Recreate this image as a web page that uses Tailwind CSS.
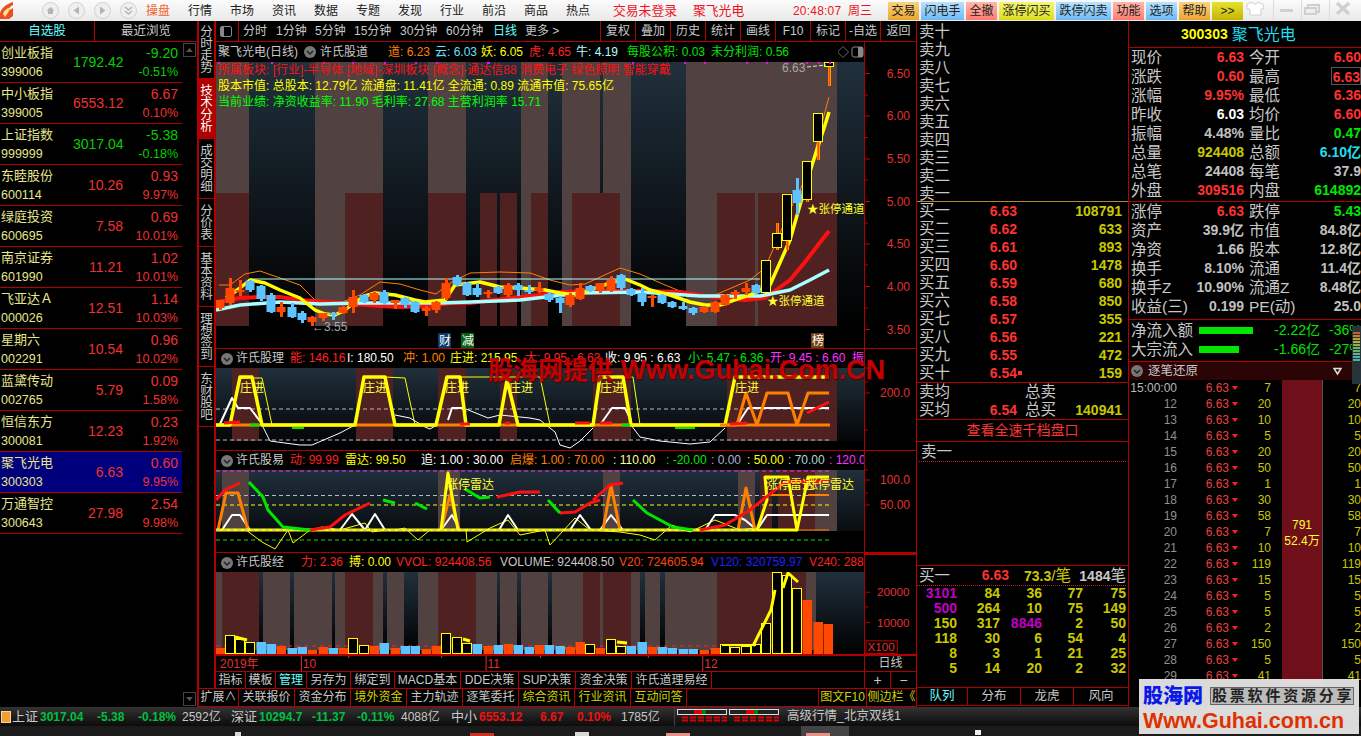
<!DOCTYPE html>
<html lang="zh-CN">
<head>
<meta charset="UTF-8">
<title>聚飞光电 日线</title>
<script src="https://cdn.jsdelivr.net/npm/@tailwindcss/browser@4"></script>
</head>
<body class="bg-black">
<div class="relative w-[1361px] h-[736px] overflow-hidden flex flex-col bg-black text-[#c8c8c8] text-[12px] font-['Liberation_Sans','Noto_Sans_CJK_SC',sans-serif]">

  <!-- top menu -->
  <header class="h-[21px] shrink-0 flex items-center bg-linear-to-b from-[#fbfbfb] to-[#e9e9e9] text-[#222] whitespace-nowrap">
    <svg width="14" height="19" viewBox="0 0 14 19" class="shrink-0"><path d="M0 12 C2 6 7 3 13 1 L13 4 C10 5 9 7 10 9 L13 7 L13 15 L9 18 L0 18 Z" fill="#e8501c"/><path d="M3 13 C4 9 8 7 11 6 C9 9 8 13 5 16 Z" fill="#ffd9a0"/></svg>
    <div class="flex items-center gap-[9px] ml-[28px] w-[96px] shrink-0">
      <svg width="17" height="17" viewBox="0 0 17 17" class="shrink-0"><circle cx="8.5" cy="8.5" r="8" fill="#efefef" stroke="#cfcfcf"/><path d="M4.5 8.5 L8.5 5 L12.5 8.5 L11 8.5 L11 12 L6 12 L6 8.5 Z" fill="#b5b5b5"/></svg>
      <svg width="17" height="17" viewBox="0 0 17 17" class="shrink-0"><circle cx="8.5" cy="8.5" r="8" fill="#efefef" stroke="#cfcfcf"/><path d="M11 4.5 L11 12.5 L5.5 8.5 Z" fill="#b5b5b5"/></svg>
      <svg width="17" height="17" viewBox="0 0 17 17" class="shrink-0"><circle cx="8.5" cy="8.5" r="8" fill="#efefef" stroke="#cfcfcf"/><path d="M6 4.5 L6 12.5 L11.5 8.5 Z" fill="#b5b5b5"/></svg>
      <svg width="17" height="17" viewBox="0 0 17 17" class="shrink-0"><circle cx="8.5" cy="8.5" r="8" fill="#efefef" stroke="#cfcfcf"/><path d="M5 5 L8.5 8 L12 5 M5 9 L8.5 12 L12 9" fill="none" stroke="#b5b5b5" stroke-width="1.6"/></svg>
    </div>
    <nav class="flex ml-[-1px] shrink-0">
      <span class="w-[42px] text-center text-[#f0642c]">操盘</span>
      <span class="w-[42px] text-center">行情</span>
      <span class="w-[42px] text-center">市场</span>
      <span class="w-[42px] text-center">资讯</span>
      <span class="w-[42px] text-center">数据</span>
      <span class="w-[42px] text-center">专题</span>
      <span class="w-[42px] text-center">发现</span>
      <span class="w-[42px] text-center">行业</span>
      <span class="w-[42px] text-center">前沿</span>
      <span class="w-[42px] text-center">商品</span>
      <span class="w-[42px] text-center">热点</span>
    </nav>
    <span class="ml-[14px] w-[80px] shrink-0 text-[#ee1122] text-[12.8px]">交易未登录</span>
    <span class="w-[100px] shrink-0 text-[#ee1122] text-[12.8px]">聚飞光电</span>
    <span class="w-[55px] shrink-0 text-[#ee1122] tracking-[0.2px]">20:48:07</span>
    <span class="w-[40px] shrink-0 text-[#ee1122]">周三</span>
    <div class="flex gap-[2px] shrink-0 text-[#222]">
      <span class="w-[31px] h-[18px] leading-[18px] text-center bg-linear-to-b from-[#fbd27a] to-[#eba52c]">交易</span>
      <span class="w-[43px] h-[18px] leading-[18px] text-center bg-linear-to-b from-[#b9e3ff] to-[#6cb9f4]">闪电手</span>
      <span class="w-[31px] h-[18px] leading-[18px] text-center bg-linear-to-b from-[#ffb8aa] to-[#ff7a72]">全撤</span>
      <span class="w-[55px] h-[18px] leading-[18px] text-center bg-linear-to-b from-[#f6f670] to-[#dcdc10]">涨停闪买</span>
      <span class="w-[55px] h-[18px] leading-[18px] text-center bg-linear-to-b from-[#b9e3ff] to-[#6cb9f4]">跌停闪卖</span>
      <span class="w-[31px] h-[18px] leading-[18px] text-center bg-linear-to-b from-[#ffb8aa] to-[#ff7a72]">功能</span>
      <span class="w-[31px] h-[18px] leading-[18px] text-center bg-linear-to-b from-[#b9e3ff] to-[#6cb9f4]">选项</span>
      <span class="w-[31px] h-[18px] leading-[18px] text-center bg-linear-to-b from-[#fbd27a] to-[#eba52c]">帮助</span>
      <span class="w-[31px] h-[18px] leading-[18px] text-center bg-linear-to-b from-[#e4e42a] to-[#c4b400]">&gt;&gt;</span>
    </div>
    <svg width="118" height="21" viewBox="0 0 118 21" class="shrink-0"><path d="M4 4 L9 2 L11 4 L13 4 L15 2 L20 4 L21 9 L18 9 L18 15 L7 15 L7 9 L4 9 Z" fill="#fff" stroke="#cfcfcf"/><line x1="30.5" y1="0" x2="30.5" y2="20" stroke="#dcdcdc"/><rect x="37" y="9" width="13" height="3" fill="#d0d0d0"/><line x1="58.5" y1="0" x2="58.5" y2="20" stroke="#dcdcdc"/><rect x="65" y="5" width="11" height="7" fill="none" stroke="#cfcfcf" stroke-width="2"/><rect x="62" y="8" width="11" height="6" fill="#eee" stroke="#cfcfcf" stroke-width="2"/><line x1="86.5" y1="0" x2="86.5" y2="20" stroke="#dcdcdc"/><path d="M94 3 L106 14 M106 3 L94 14" stroke="#d0d0d0" stroke-width="3.5"/></svg>
  </header>

  <main class="h-[686px] shrink-0 flex">
    <!-- watch list -->
    <aside class="w-[197px] shrink-0 flex flex-col">
      <div class="h-[21px] shrink-0 flex border-b border-[#b00000] leading-[20px]">
        <span class="w-[95px] text-center text-[#66ffff] border-r border-[#b00000] text-[12.5px]">自选股</span>
        <span class="flex-1 text-center text-[12.5px]">最近浏览</span>
      </div>
      <div class="flex-1 flex">
        <div id="watch" class="w-[182px] shrink-0"></div>
        <div class="flex-1 flex flex-col justify-between pl-[1px] pr-[1px] pt-[1px] pb-[1px]">
          <div class="w-[13px] h-[14px] border border-[#444] flex items-center justify-center"><svg width="7" height="4"><path d="M0 4 L3.5 0 L7 4 Z" fill="#555"/></svg></div>
          <div class="w-[13px] h-[14px] border border-[#444] flex items-center justify-center"><svg width="7" height="4"><path d="M0 0 L3.5 4 L7 0 Z" fill="#555"/></svg></div>
        </div>
      </div>
    </aside>

    <!-- center block -->
    <section class="w-[720px] shrink-0 flex flex-col border-l-2 border-[#b00000]">
      <div class="h-[667px] shrink-0 flex">
        <div class="w-[17px] shrink-0 flex flex-col border-r-2 border-[#b00000] leading-[12px] text-[12.5px]">
          <div class="h-[58px] shrink-0 flex justify-center items-center border-b border-[#b00000]"><span class="block w-[13px] break-all text-center">分时走势</span></div>
          <div class="h-[60px] shrink-0 flex justify-center items-center bg-[#b00000] text-white"><span class="block w-[13px] break-all text-center">技术分析</span></div>
          <div class="h-[60px] shrink-0 flex justify-center items-center border-b border-[#b00000]"><span class="block w-[13px] break-all text-center">成交明细</span></div>
          <div class="h-[48px] shrink-0 flex justify-center items-center border-b border-[#b00000]"><span class="block w-[13px] break-all text-center">分价表</span></div>
          <div class="h-[60px] shrink-0 flex justify-center items-center border-b border-[#b00000]"><span class="block w-[13px] break-all text-center">基本资料</span></div>
          <div class="h-[60px] shrink-0 flex justify-center items-center border-b border-[#b00000]"><span class="block w-[13px] break-all text-center">理想签到</span></div>
          <div class="h-[60px] shrink-0 flex justify-center items-center border-b border-[#b00000]"><span class="block w-[13px] break-all text-center">东财股吧</span></div>
        </div>
        <div class="w-[701px] shrink-0 flex flex-col border-r border-[#b00000]">
          <!-- period toolbar -->
          <div class="h-[21px] shrink-0 flex items-center border-b border-[#b00000] whitespace-nowrap">
            <div class="w-[23px] h-[20px] shrink-0 flex items-center justify-center border-r border-[#b00000] pr-[2px]"><span class="w-[12px] h-[11px] border border-[#888] rounded-[2px] flex"><span class="w-[3px] bg-[#888]"></span></span></div>
            <span class="w-[33px] shrink-0 ml-[4px]">分时</span>
            <span class="w-[39px] shrink-0">1分钟</span>
            <span class="w-[39px] shrink-0">5分钟</span>
            <span class="w-[46px] shrink-0">15分钟</span>
            <span class="w-[46px] shrink-0">30分钟</span>
            <span class="w-[47px] shrink-0">60分钟</span>
            <span class="w-[32px] shrink-0 text-[#66ffff]">日线</span>
            <span class="w-[75px] shrink-0">更多 &gt;</span>
            <span class="w-[35px] shrink-0 h-[20px] leading-[20px] text-center border-l border-[#b00000]">复权</span>
            <span class="w-[35px] shrink-0 h-[20px] leading-[20px] text-center border-l border-[#b00000]">叠加</span>
            <span class="w-[35px] shrink-0 h-[20px] leading-[20px] text-center border-l border-[#b00000]">历史</span>
            <span class="w-[35px] shrink-0 h-[20px] leading-[20px] text-center border-l border-[#b00000]">统计</span>
            <span class="w-[35px] shrink-0 h-[20px] leading-[20px] text-center border-l border-[#b00000]">画线</span>
            <span class="w-[35px] shrink-0 h-[20px] leading-[20px] text-center border-l border-[#b00000]">F10</span>
            <span class="w-[35px] shrink-0 h-[20px] leading-[20px] text-center border-l border-[#b00000]">标记</span>
            <span class="w-[35px] shrink-0 h-[20px] leading-[20px] text-center border-l border-[#b00000]">-自选</span>
            <span class="flex-1 h-[20px] leading-[20px] text-center border-l border-[#b00000]">返回</span>
          </div>

          <!-- pane 1: price -->
          <div class="h-[307px] shrink-0 flex border-b border-[#b00000]">
            <div class="w-[649px] shrink-0 flex flex-col border-r border-[#b00000]">
              <div class="h-[20px] shrink-0 flex items-center whitespace-nowrap overflow-hidden pl-[2px] leading-[20px]">
                <span class="w-[86px] shrink-0">聚飞光电(日线)</span>
                <svg width="12" height="12" viewBox="0 0 12 12" class="shrink-0 mr-[4px]"><circle cx="6" cy="6" r="6" fill="#777"/><path d="M3 5 L6 8 L9 5" fill="none" stroke="#222" stroke-width="1.5"/></svg>
                <span class="w-[68px] shrink-0">许氏股道</span>
                <span class="w-[47px] shrink-0 text-[#ff8000]">道: 6.23</span>
                <span class="w-[46px] shrink-0 text-[#66e0ff]">云: 6.03</span>
                <span class="w-[48px] shrink-0 text-[#ffff00]">妖: 6.05</span>
                <span class="w-[47px] shrink-0 text-[#ff2020]">虎: 4.65</span>
                <span class="w-[51px] shrink-0 text-[#b0ffff]">牛: 4.19</span>
                <span class="w-[84px] shrink-0 text-[#00e600]">每股公积: 0.03</span>
                <span class="w-[127px] shrink-0 text-[#00e600]">未分利润: 0.56</span>
                <svg width="26" height="14" viewBox="0 0 26 14" class="shrink-0"><path d="M5 1.5 L10.5 7 L5 12.5 L-0.5 7 Z" fill="none" stroke="#666"/><rect x="14" y="2" width="11" height="10" rx="2" fill="none" stroke="#888"/><rect x="20" y="2" width="5" height="10" fill="#888"/></svg>
              </div>
              <svg id="p1" width="648" height="286" viewBox="216 62 648 286" class="block"></svg>
            </div>
            <svg id="a1" width="51" height="306" viewBox="866 42 51 306" class="block"></svg>
          </div>

          <!-- pane 2 -->
          <div class="h-[102px] shrink-0 flex border-b border-[#b00000]">
            <div class="w-[649px] shrink-0 flex flex-col border-r border-[#b00000]">
              <div class="h-[19px] shrink-0 flex items-center whitespace-nowrap overflow-hidden pl-[2px] leading-[19px]">
                <svg width="12" height="12" viewBox="0 0 12 12" class="shrink-0 ml-[3px] mr-[3px]"><circle cx="6" cy="6" r="6" fill="#777"/><path d="M3 5 L6 8 L9 5" fill="none" stroke="#222" stroke-width="1.5"/></svg>
                <span class="w-[54px] shrink-0">许氏股理</span>
                <span class="w-[57px] shrink-0 text-[#ff2020]">能: 146.16</span>
                <span class="w-[56px] shrink-0 text-white">I: 180.50</span>
                <span class="w-[47px] shrink-0 text-[#ff8000]">冲: 1.00</span>
                <span class="w-[75px] shrink-0 text-[#ffff00]">庄进: 215.95</span>
                <span class="w-[80px] shrink-0 text-[#ff2020]">大: 9.95 : 6.63</span>
                <span class="w-[83px] shrink-0 text-white">收: 9.95 : 6.63</span>
                <span class="w-[82px] shrink-0 text-[#00e600]">小: 5.47 : 6.36</span>
                <span class="w-[82px] shrink-0 text-[#ff30ff]">开: 9.45 : 6.60</span>
                <span class="text-[#ff30ff]">振</span>
              </div>
              <svg id="p2" width="648" height="82" viewBox="216 368 648 82" class="block"></svg>
            </div>
            <svg id="a2" width="51" height="101" viewBox="866 349 51 101" class="block"></svg>
          </div>

          <!-- pane 3 -->
          <div class="h-[102px] shrink-0 flex border-b border-[#b00000]">
            <div class="w-[649px] shrink-0 flex flex-col border-r border-[#b00000]">
              <div class="h-[19px] shrink-0 flex items-center whitespace-nowrap overflow-hidden pl-[2px] leading-[19px]">
                <svg width="12" height="12" viewBox="0 0 12 12" class="shrink-0 ml-[3px] mr-[3px]"><circle cx="6" cy="6" r="6" fill="#777"/><path d="M3 5 L6 8 L9 5" fill="none" stroke="#222" stroke-width="1.5"/></svg>
                <span class="w-[54px] shrink-0">许氏股易</span>
                <span class="w-[55px] shrink-0 text-[#ff2020]">动: 99.99</span>
                <span class="w-[76px] shrink-0 text-[#ffff00]">雷达: 99.50</span>
                <span class="w-[89px] shrink-0 text-white">追: 1.00 : 30.00</span>
                <span class="w-[103px] shrink-0 text-[#ff8000]">启爆: 1.00 : 70.00</span>
                <span class="w-[53px] shrink-0 text-[#ffff99]">: 110.00</span>
                <span class="w-[45px] shrink-0 text-[#00e600]">: -20.00</span>
                <span class="w-[36px] shrink-0 text-[#b0b0d8]">: 0.00</span>
                <span class="w-[41px] shrink-0 text-[#ffff00]">: 50.00</span>
                <span class="w-[41px] shrink-0 text-[#b0d8d8]">: 70.00</span>
                <span class="text-[#ff30ff]">: 120.0</span>
              </div>
              <svg id="p3" width="648" height="82" viewBox="216 470 648 82" class="block"></svg>
            </div>
            <svg id="a3" width="51" height="101" viewBox="866 451 51 101" class="block"></svg>
          </div>

          <!-- pane 4 -->
          <div class="h-[103px] shrink-0 flex border-b-2 border-[#b00000]">
            <div class="w-[649px] shrink-0 flex flex-col border-r border-[#b00000]">
              <div class="h-[19px] shrink-0 flex items-center whitespace-nowrap overflow-hidden pl-[2px] leading-[19px]">
                <svg width="12" height="12" viewBox="0 0 12 12" class="shrink-0 ml-[3px] mr-[3px]"><circle cx="6" cy="6" r="6" fill="#777"/><path d="M3 5 L6 8 L9 5" fill="none" stroke="#222" stroke-width="1.5"/></svg>
                <span class="w-[65px] shrink-0">许氏股经</span>
                <span class="w-[48px] shrink-0 text-[#ff2020]">力: 2.36</span>
                <span class="w-[47px] shrink-0 text-[#ffff00]">搏: 0.00</span>
                <span class="w-[104px] shrink-0 text-[#ff2020]">VVOL: 924408.56</span>
                <span class="w-[119px] shrink-0">VOLUME: 924408.50</span>
                <span class="w-[92px] shrink-0 text-[#ff4800]">V20: 724605.94</span>
                <span class="w-[98px] shrink-0 text-[#2020ff]">V120: 320759.97</span>
                <span class="text-[#ff2020]">V240: 2880</span>
              </div>
              <svg id="p4" width="648" height="82" viewBox="216 572 648 82" class="block"></svg>
            </div>
            <svg id="a4" width="51" height="101" viewBox="866 553 51 101" class="block border-t-2 border-[#b00000]"></svg>
          </div>

          <!-- date axis -->
          <div class="h-[16px] shrink-0 flex border-b border-[#b00000] text-[#e03030] leading-[15px]">
            <svg width="649" height="15" viewBox="216 656 649 15" class="block shrink-0 border-r border-[#b00000]"><g fill="#e03030" font-size="12"><text x="220" y="668">2019年</text><text x="303" y="668">10</text><text x="488" y="668">11</text><text x="705" y="668">12</text></g><g stroke="#e03030"><line x1="301.5" y1="656" x2="301.5" y2="671"/><line x1="486.5" y1="656" x2="486.5" y2="671"/><line x1="703.5" y1="656" x2="703.5" y2="671"/><line x1="349" y1="656" x2="349" y2="658"/><line x1="442" y1="656" x2="442" y2="658"/><line x1="541" y1="656" x2="541" y2="658"/><line x1="649" y1="656" x2="649" y2="658"/></g></svg>
            <span class="flex-1 text-center text-[#c8c8c8]">日线</span>
          </div>

          <!-- indicator tabs -->
          <div class="h-[17px] shrink-0 flex leading-[16px] whitespace-nowrap">
            <div class="w-[649px] shrink-0 flex border-r border-[#b00000]">
              <span class="w-[30px] shrink-0 text-center border-r border-[#b00000]">指标</span>
              <span class="w-[30px] shrink-0 text-center border-r border-[#b00000]">模板</span>
              <span class="w-[31px] shrink-0 text-center border-r border-[#b00000] text-[#66ffff]">管理</span>
              <span class="w-[44px] shrink-0 text-center border-r border-[#b00000]">另存为</span>
              <span class="w-[44px] shrink-0 text-center border-r border-[#b00000]">绑定到</span>
              <span class="w-[66px] shrink-0 text-center border-r border-[#b00000]">MACD基本</span>
              <span class="w-[58px] shrink-0 text-center border-r border-[#b00000]">DDE决策</span>
              <span class="w-[57px] shrink-0 text-center border-r border-[#b00000]">SUP决策</span>
              <span class="w-[56px] shrink-0 text-center border-r border-[#b00000]">资金决策</span>
              <span class="w-[80px] shrink-0 text-center border-r border-[#b00000]">许氏道理易经</span>
            </div>
            <span class="flex-1 text-center border-r border-[#b00000] text-[14px]">+</span>
            <span class="flex-1 text-center text-[14px]">−</span>
          </div>
        </div>
      </div>
      <!-- bottom tabs -->
      <div class="h-[19px] shrink-0 flex border-y border-[#b00000] leading-[17px] whitespace-nowrap">
        <span class="w-[40px] shrink-0 text-center border-r border-[#b00000]">扩展∧</span>
        <span class="w-[56px] shrink-0 text-center border-r border-[#b00000]">关联报价</span>
        <span class="w-[56px] shrink-0 text-center border-r border-[#b00000]">资金分布</span>
        <span class="w-[56px] shrink-0 text-center border-r border-[#b00000] text-[#d0d000]">境外资金</span>
        <span class="w-[56px] shrink-0 text-center border-r border-[#b00000]">主力轨迹</span>
        <span class="w-[56px] shrink-0 text-center border-r border-[#b00000]">逐笔委托</span>
        <span class="w-[56px] shrink-0 text-center border-r border-[#b00000] text-[#d0d000]">综合资讯</span>
        <span class="w-[56px] shrink-0 text-center border-r border-[#b00000] text-[#d0d000]">行业资讯</span>
        <span class="w-[56px] shrink-0 text-center border-r border-[#b00000] text-[#d0d000]">互动问答</span>
        <span class="w-[131px] shrink-0"></span>
        <span class="w-[49px] shrink-0 text-center border-x border-[#b00000] text-[#d0d000]">图文F10</span>
        <span class="flex-1 text-center text-[#d0d000] border-r border-[#b00000]">侧边栏《</span>
      </div>
    </section>

    <!-- order book -->
    <section class="w-[212px] shrink-0 flex flex-col border-r border-[#b00000] text-[15.5px] leading-[18px]">
      <div id="asks" class="h-[181px] shrink-0 pt-[2px] pl-[2px] border-b border-[#b08a30] overflow-hidden"></div>
      <div id="bids" class="h-[181px] shrink-0 border-b border-[#b00000] overflow-hidden"></div>
      <div class="h-[37px] shrink-0 border-b border-[#b00000]">
        <div class="flex h-[18px] pl-[2px]"><span class="w-[106px] shrink-0">卖均</span><span>总卖</span></div>
        <div class="flex h-[18px] pl-[2px]"><span class="w-[31px] shrink-0">买均</span><span class="w-[67px] shrink-0 text-right font-bold text-[14px] text-[#ff3232]">6.54</span><span class="w-[8px]"></span><span class="w-[31px]">总买</span><span class="w-[66px] text-right font-bold text-[14px] text-[#c8c800]">140941</span></div>
      </div>
      <div class="h-[22px] shrink-0 border-b border-[#b00000] text-center text-[#ff3232] text-[14px] leading-[21px]">查看全速千档盘口</div>
      <div class="h-[124px] shrink-0 border-b border-[#b00000]">
        <div class="h-[20px] pl-[2px] mx-[2px] border-b border-dotted border-[#c02020] leading-[19px]">卖一</div>
      </div>
      <div class="h-[20px] shrink-0 flex pl-[2px] mr-[2px] border-b border-dotted border-[#c02020] leading-[19px]">
        <span class="w-[31px] shrink-0">买一</span>
        <span class="w-[59px] shrink-0 text-right font-bold text-[14px] text-[#ff3232]">6.63</span>
        <span class="w-[62px] shrink-0 text-right text-[#c8c800]"><b class="text-[14px]">73.3</b>/笔</span>
        <span class="flex-1 text-right"><b class="text-[14px]">1484</b>笔</span>
      </div>
      <div id="queue" class="h-[102px] shrink-0 border-b border-[#b00000] pr-[2px] text-[14px] leading-[15px] font-bold text-[#c8c800]"></div>
      <div class="h-[18px] shrink-0 flex border-b border-[#b00000] text-[12.5px] leading-[17px]">
        <span class="w-[51px] shrink-0 text-center border-r border-[#b00000] text-[#66ffff]">队列</span>
        <span class="w-[53px] shrink-0 text-center border-r border-[#b00000]">分布</span>
        <span class="w-[53px] shrink-0 text-center border-r border-[#b00000]">龙虎</span>
        <span class="flex-1 text-center">风向</span>
      </div>
    </section>

    <!-- quote panel -->
    <section class="flex-1 min-w-0 flex flex-col text-[15.5px] leading-[19px]">
      <div class="h-[27px] shrink-0 flex items-center border-b border-[#b00000] pl-[52px] whitespace-nowrap">
        <b class="text-[14px] text-[#ffff00] mr-[4px]">300303</b><span class="text-[#22ddee] text-[16px]">聚飞光电</span>
      </div>
      <div id="q1" class="h-[154px] shrink-0 border-b border-[#b00000]"></div>
      <div id="q2" class="h-[118px] shrink-0 border-b border-[#b00000]"></div>
      <div class="h-[42px] shrink-0 border-b border-[#b00000] pt-[1px] whitespace-nowrap">
        <div class="flex items-center h-[19px] pl-[2px]"><span class="w-[68px] shrink-0">净流入额</span><span class="w-[54px] h-[7px] shrink-0 bg-[#00e600]"></span><span class="w-[67px] shrink-0 text-right text-[14px] text-[#00e600]">-2.22亿</span><span class="ml-[9px] text-[14px] text-[#00e600]">-36%</span></div>
        <div class="flex items-center h-[19px] pl-[2px]"><span class="w-[68px] shrink-0">大宗流入</span><span class="w-[54px] h-[7px] shrink-0"><span class="block w-[40px] h-[7px] bg-[#00e600]"></span></span><span class="w-[67px] shrink-0 text-right text-[14px] text-[#00e600]">-1.66亿</span><span class="ml-[9px] text-[14px] text-[#00e600]">-27%</span></div>
      </div>
      <div class="h-[18px] shrink-0 flex items-center bg-[#2b0406] text-[12.5px] leading-[18px] relative">
        <svg width="12" height="12" viewBox="0 0 12 12" class="ml-[2px] mr-[5px]"><circle cx="6" cy="6" r="6" fill="#777"/><path d="M3 5 L6 8 L9 5" fill="none" stroke="#222" stroke-width="1.5"/></svg>
        <span>逐笔还原</span>
        <svg width="9" height="9" viewBox="0 0 9 9" class="ml-[135px]"><path d="M1 1.5 L8 1.5 L4.5 7 Z" fill="none" stroke="#ddd" stroke-width="1.5"/></svg>
      </div>
      <div class="relative flex-1 overflow-hidden text-[12px] leading-[16px]">
        <div class="absolute left-[153px] top-0 h-[304px] w-[41px] bg-[#6e0f1a] border-r border-[#555] pt-[137px] text-center text-[#ffff30] leading-[16px]">791<br>52.4万</div>
        <div id="tape" class="relative"></div>
      </div>
    </section>
  </main>

  <!-- status bar -->
  <div class="h-[19px] shrink-0 flex items-center bg-linear-to-b from-[#333] to-[#0c0c0c] whitespace-nowrap text-[12px]">
    <span class="w-[10px] h-[12px] ml-[1px] mr-[1px] shrink-0 bg-[#f0a030] border border-[#ffd890]"></span>
    <span class="w-[28px] shrink-0 text-[13px]">上证</span>
    <b class="w-[57px] shrink-0 text-[#00c040]">3017.04</b>
    <b class="w-[41px] shrink-0 text-[#00c040]">-5.38</b>
    <b class="w-[44px] shrink-0 text-[#00c040]">-0.18%</b>
    <span class="w-[49px] shrink-0">2592亿</span>
    <span class="w-[28px] shrink-0 text-[13px]">深证</span>
    <b class="w-[53px] shrink-0 text-[#00c040]">10294.7</b>
    <b class="w-[45px] shrink-0 text-[#00c040]">-11.37</b>
    <b class="w-[44px] shrink-0 text-[#00c040]">-0.11%</b>
    <span class="w-[50px] shrink-0">4088亿</span>
    <span class="w-[28px] shrink-0 text-[13px]">中小</span>
    <b class="w-[61px] shrink-0 text-[#f01010]">6553.12</b>
    <b class="w-[37px] shrink-0 text-[#f01010]">6.67</b>
    <b class="w-[44px] shrink-0 text-[#f01010]">0.10%</b>
    <span class="w-[50px] shrink-0">1785亿</span>
    <svg width="110" height="19" viewBox="0 0 110 19" class="shrink-0"><line x1="3.5" y1="0" x2="3.5" y2="19" stroke="#444"/><g id="ind"><rect x="6.5" y="2.5" width="49" height="5" fill="#222" stroke="#ddd"/><rect x="23" y="3" width="8" height="4" fill="#e00000"/><rect x="31" y="3" width="4" height="4" fill="#008000"/><rect x="58.5" y="2.5" width="49" height="5" fill="#222" stroke="#ddd"/><rect x="75" y="3" width="8" height="4" fill="#e00000"/><rect x="83" y="3" width="4" height="4" fill="#008000"/><path d="M11 10.5 H56 M11 13.5 H56 M63 10.5 H108 M63 13.5 H108" stroke="#e00000" stroke-width="2" stroke-dasharray="6 2"/></g></svg>
    <span class="ml-[6px] text-[12.5px]">高级行情_北京双线1</span>
  </div>

  <!-- taskbar sliver -->
  <div class="h-[10px] shrink-0 bg-[#1b1b1b]">
    <svg width="1361" height="10" viewBox="0 726 1361 10" class="block"><rect x="801" y="726" width="48" height="10" fill="#444"/><rect x="470" y="733" width="24" height="3" fill="#d03020"/><rect x="666" y="733" width="24" height="3" fill="#e89088"/><rect x="806" y="733" width="24" height="3" fill="#e89088"/><rect x="575" y="732" width="14" height="4" fill="#d8d8d8"/><rect x="235" y="732" width="6" height="4" fill="#d8d8d8"/><rect x="975" y="730" width="6" height="5" fill="#eee"/></svg>
  </div>

  <!-- overlays -->
  <div class="absolute left-[488px] top-[351px] whitespace-nowrap font-bold text-[27px] leading-[38px] text-[#d80000]/90 [text-shadow:1px_1px_1px_rgba(60,0,0,0.8)]"><span class="text-[25px]">股海网提供</span> Www.Guhai.Com.CN</div>
  <div class="absolute left-[1352px] top-[326px] w-[9px] h-[58px] bg-[#26343a] flex flex-col gap-[1px] p-[1px] pt-[6px]">
    <span class="h-[2px] bg-[#c06030]"></span><span class="h-[2px] bg-[#c08030]"></span><span class="h-[2px] bg-[#c0a030]"></span><span class="h-[2px] bg-[#b0b040]"></span><span class="h-[2px] bg-[#90b050]"></span><span class="h-[2px] bg-[#70b060]"></span><span class="h-[2px] bg-[#60b070]"></span><span class="h-[2px] bg-[#60b090]"></span><span class="h-[2px] bg-[#50b0a0]"></span><span class="h-[2px] bg-[#50b0b0]"></span>
  </div>
  <div class="absolute left-[1139px] top-[679px] w-[220px] h-[55px] bg-[#e6e6e6]/95 flex flex-col px-[4px] pt-[5px]">
    <div class="flex items-center h-[24px]">
      <b class="text-[#0a18e8] text-[20px] leading-[24px] font-black w-[67px] shrink-0">股海网</b>
      <span class="w-[144px] h-[18px] shrink-0 bg-[#bbb] border border-[#666] text-[#222] font-bold text-[15px] leading-[16px] tracking-[2.8px] pl-[1px] whitespace-nowrap overflow-hidden">股票软件资源分享</span>
    </div>
    <b class="text-[#e03000] text-[21.5px] leading-[26px] whitespace-nowrap">Www.Guhai.com.cn</b>
  </div>
</div>

<script>
// ---- text tables
const watch = [
  ['创业板指','399006','1792.42','-9.20','-0.51%',0],['中小板指','399005','6553.12','6.67','0.10%',1],
  ['上证指数','999999','3017.04','-5.38','-0.18%',0],['东睦股份','600114','10.26','0.93','9.97%',1],
  ['绿庭投资','600695','7.58','0.69','10.01%',1],['南京证券','601990','11.21','1.02','10.01%',1],
  ['飞亚达Ａ','000026','12.51','1.14','10.03%',1],['星期六','002291','10.54','0.96','10.02%',1],
  ['蓝黛传动','002765','5.79','0.09','1.58%',1],['恒信东方','300081','12.23','0.23','1.92%',1],
  ['聚飞光电','300303','6.63','0.60','9.95%',1],['万通智控','300643','27.98','2.54','9.98%',1]
];
document.getElementById('watch').innerHTML = watch.map(r => `
  <div class="h-[41px] grid grid-cols-[73px_50px_55px] border-b border-[#b00000] ${r[1]=='300303'?'bg-[#00007c]':''}">
    <div class="pl-[1px] text-[#e6e68c]"><div class="text-[13px] leading-[22px] whitespace-nowrap">${r[0]}</div><div class="text-[12.5px] leading-[16px]">${r[1]}</div></div>
    <div class="text-right text-[14px] leading-[40px] ${r[5]?'text-[#f03030]':'text-[#00d000]'}">${r[2]}</div>
    <div class="text-right ${r[5]?'text-[#f03030]':'text-[#00d000]'}"><div class="text-[14px] leading-[22px]">${r[3]}</div><div class="text-[12.5px] leading-[16px]">${r[4]}</div></div>
  </div>`).join('');

document.getElementById('asks').innerHTML = ['卖十','卖九','卖八','卖七','卖六','卖五','卖四','卖三','卖二','卖一'].map(s => `<div class="h-[18px]">${s}</div>`).join('');
const bids = [['买一','6.63','108791'],['买二','6.62','633'],['买三','6.61','893'],['买四','6.60','1478'],['买五','6.59','680'],['买六','6.58','850'],['买七','6.57','355'],['买八','6.56','221'],['买九','6.55','472'],['买十','6.54','159']];
document.getElementById('bids').innerHTML = bids.map((r,i) => `
  <div class="h-[18px] flex pl-[2px] font-bold">
    <span class="w-[31px] shrink-0 font-normal">${r[0]}</span>
    <span class="w-[67px] shrink-0 text-right text-[14px] text-[#ff3232]">${r[1]}</span>
    <span class="w-[6px] shrink-0 flex items-center justify-center">${i==9?'<i class="block w-[4px] h-[4px] bg-[#ff3232]"></i>':''}</span>
    <span class="w-[99px] shrink-0 text-right text-[14px] text-[#c8c800]">${r[2]}</span>
  </div>`).join('');

const queue = [[3101,84,36,77,75],[500,264,10,75,149],[150,317,8846,2,50],[118,30,6,54,4],[8,3,1,21,25],[5,14,20,2,32]];
document.getElementById('queue').innerHTML = queue.map(r => `<div class="h-[15px] grid grid-cols-[40px_43px_42px_41px_43px] text-right">` +
  r.map(v => `<span class="${v>=500?'text-[#c000c0]':''}">${v}</span>`).join('') + `</div>`).join('');

const R='text-[#ff3232]',G='text-[#00e600]',W='text-white',S='text-[#c0c0c0]',Y='text-[#c8c800]',C='text-[#22ddee]';
const quoteRow = r => `<div class="h-[19px] flex pl-[2px] whitespace-nowrap">
    <span class="w-[32px] shrink-0">${r[0]}</span>
    <b class="w-[81px] shrink-0 text-right text-[14px] ${r[2]}">${r[1]}</b>
    <span class="w-[34px] ml-[5px] shrink-0">${r[3]}</span>
    <b class="w-[78px] shrink-0 text-right text-[14px] ${r[5]}"><span class="${r[6]||''}">${r[4]}</span></b>
  </div>`;
document.getElementById('q1').innerHTML = [
  ['现价','6.63',R,'今开','6.60',R],['涨跌','0.60',R,'最高','6.63',R,'inline-block h-[18px] pl-[1px] border border-[#555]'],
  ['涨幅','9.95%',R,'最低','6.36',R],['昨收','6.03',W,'均价','6.60',R],
  ['振幅','4.48%',S,'量比','0.47',G],['总量','924408',Y,'总额','6.10亿',C],
  ['总笔','24408',S,'每笔','37.9',S],['外盘','309516',R,'内盘','614892',G]].map(quoteRow).join('');
document.getElementById('q2').innerHTML = [
  ['涨停','6.63',R,'跌停','5.43',G],['资产','39.9亿',S,'市值','84.8亿',S],
  ['净资','1.66',S,'股本','12.8亿',S],['换手','8.10%',S,'流通','11.4亿',S],
  ['换手Z','10.90%',S,'流通Z','8.48亿',S],['收益(三)','0.199',S,'PE(动)','25.0',S]].map(quoteRow).join('');

const tape = [['15:00:00',7],['12',20],['13',10],['14',5],['15',20],['16',50],['17',1],['18',30],['19',58],['20',7],['21',10],['22',119],['23',15],['24',5],['25',5],['26',2],['27',150],['28',5],['29',41]];
document.getElementById('tape').innerHTML = tape.map(r => `
  <div class="h-[16px] flex whitespace-nowrap">
    <span class="w-[48px] shrink-0 text-right ${r[0].length>2?'text-[#b8b8b8]':'text-[#909090]'}">${r[0]}</span>
    <span class="w-[52px] shrink-0 text-right text-[#e84040]">6.63</span>
    <svg width="6" height="16" viewBox="0 0 6 16" class="shrink-0 ml-[3px]"><path d="M0 6 H6 L3 10 Z" fill="#ff2020"/></svg>
    <span class="w-[33px] shrink-0 text-right text-[#c8c800]">${r[1]}</span>
    <span class="flex-1 text-right text-[#c8c800] ml-[52px] w-[38px]">${r[1]}</span>
  </div>`).join('');

// ---- chart helpers (svg coordinates are page pixels)
const GRAY='#514141', RED='#4f2121';
const bars = (list,y0,y1,fill) => list.map(([a,b]) => `<rect x="${a}" y="${y0}" width="${b-a}" height="${y1-y0}" fill="${fill}"/>`).join('');
const pl = (pts,color,w,extra='') => `<polyline points="${pts}" fill="none" stroke="${color}" stroke-width="${w}" stroke-linejoin="round" ${extra}/>`;
const bg = (id,x,y,w,h) => `<defs><linearGradient id="${id}" x1="0" y1="0" x2="0" y2="1"><stop offset="0" stop-color="#20303c"/><stop offset="1" stop-color="#000"/></linearGradient></defs><rect x="${x}" y="${y}" width="${w}" height="${h}" fill="url(#${id})"/>`;
const txt = (x,y,s,fill='#ffff30',size=12,anchor='start') => `<text x="${x}" y="${y}" fill="${fill}" font-size="${size}" text-anchor="${anchor}">${s}</text>`;
const dash = (y,color,x1=216,x2=829) => `<line x1="${x1}" x2="${x2}" y1="${y}" y2="${y}" stroke="${color}" stroke-dasharray="4 3"/>`;

// pane 1 candles: x, body top, body bottom, high, low, kind
const ORG='#ff4800', BLU='#5cc3ff';
const candles = [
 [220,300,308,300,310,'o'],[230,288,303,278,305,'o'],[240,290,292,280,296,'o'],[250,281,290,280,292,'b'],[261,286,299,285,301,'b'],
 [271,295,312,293,313,'b'],[281,307,312,302,317,'o'],[292,307,317,303,318,'b'],[302,313,320,311,323,'b'],[312,317,322,316,326,'o'],
 [323,313,318,313,321,'o'],[333,313,315,312,320,'b'],[343,307,313,306,314,'o'],[353,297,307,290,313,'o'],[364,295,302,294,303,'b'],
 [374,293,300,292,303,'o'],[384,292,303,290,305,'b'],[395,300,303,300,309,'o'],[405,298,305,297,308,'b'],[415,302,312,301,313,'b'],
 [426,308,311,306,316,'o'],[436,302,310,301,313,'o'],[446,283,298,278,300,'o'],[457,277,285,275,286,'b'],[467,283,295,282,296,'b'],
 [477,288,295,283,297,'b'],[488,292,294,290,298,'o'],[498,287,293,286,294,'b'],[508,285,295,283,297,'o'],[518,285,290,283,296,'b'],
 [529,290,292,285,294,'b'],[539,288,291,282,293,'o'],[549,294,300,292,302,'b'],[560,298,303,296,313,'b'],[570,295,305,293,307,'o'],
 [580,288,299,283,300,'o'],[590,286,291,285,292,'b'],[600,283,290,283,293,'o'],[611,280,290,276,292,'o'],[621,275,288,274,290,'b'],
 [631,289,295,288,296,'b'],[642,293,302,288,306,'b'],[652,296,298,295,307,'o'],[662,295,303,294,304,'b'],[672,302,307,301,308,'b'],
 [683,306,309,302,310,'b'],[693,308,313,307,315,'b'],[704,307,312,306,313,'o'],[715,302,312,301,313,'o'],[725,295,305,294,306,'o'],
 [735,292,295,290,299,'o'],[746,288,292,283,295,'o'],[756,285,293,284,294,'b'],[766,260,292,260,293,'h'],[777,233,247,223,250,'h'],
 [787,194,240,194,250,'h'],[797,190,203,178,215,'b'],[807,161,199,161,202,'h'],[818,113,141,113,160,'h'],[829,62,66,62,86,'h']
];
const candle = ([x,t,b,h,l,k]) => {
  if (k=='h') return `<rect x="${x-1}" y="${h}" width="3" height="${l-h}" fill="#ffa000"/><rect x="${x-.25}" y="${h}" width="1" height="${l-h}" fill="#ff2000"/><rect x="${x-4.5}" y="${t+.5}" width="9" height="${b-t}" fill="#000" stroke="#ffff00"/>`;
  const c = k=='o'?ORG:BLU;
  return `<rect x="${x-1}" y="${h}" width="3" height="${l-h}" fill="${c}"/><rect x="${x-4.5}" y="${t}" width="9" height="${Math.max(b-t,2)}" fill="${c}"/>`;
};
const magenta = [218,271,323,352,384,415,436,487,488,632,684,704,746,766,787,806,818,829];
document.getElementById('p1').innerHTML =
  bg('g1',216,62,648,264) +
  bars([[216,249],[315,383],[428,466],[521,548],[562,600],[603,631],[686,837]],62,193,GRAY) +
  bars([[216,249],[345,383],[428,466],[480,497],[500,517],[531,548],[572,620],[717,755],[758,837]],193,326,RED) +
  bars([[315,345],[521,531],[562,572],[620,631],[686,717],[755,758]],193,326,GRAY) +
  `<rect x="216" y="326" width="648" height="22" fill="#000"/>` +
  pl('219,285 230,285 245,274 260,271 280,278 300,285 315,300 340,303 360,295 380,282 400,284 420,290 436,294 450,283 470,273 500,272 530,273 550,280 570,285 585,284 620,268 640,274 665,285 690,295 715,295 750,280 765,268 790,210 812,165 820,130 829,97','#ff8000',1) +
  pl('250,279 760,279','#b0ffff',1) +
  pl('216,302 240,298 260,297 280,297 300,300 340,303 380,306 400,307 430,306 450,303 470,303 510,298 540,295 560,292 600,291 640,291 680,292 720,298 745,300 765,298 790,280 805,262 818,245 829,231','#ff1010',4) +
  pl('216,310 240,305 280,302 320,304 360,303 400,303 440,303 470,302 520,300 580,293 640,292 700,296 760,296 790,290 810,280 829,270','#aaffff',3.5) +
  pl('226,298 240,288 250,280 265,283 280,290 300,298 315,310 325,314 335,315 345,310 355,302 365,296 375,293 395,295 415,300 425,302 445,300 455,285 480,282 500,287 520,288 545,290 560,293 575,295 590,290 610,283 625,279 640,285 650,290 670,295 690,302 705,305 720,305 740,298 750,295 770,285 790,240 800,205 812,165 825,125 829,112','#ffff00',3.5) +
  candles.map(candle).join('') +
  magenta.map(x => `<rect x="${x}" y="62" width="2" height="2" fill="#ff00ff"/>`).join('') +
  txt(218,74,'所属板块: [行业]-半导体 [地域]-深圳板块 [概念]-通达信88 消费电子 绿色照明 智能穿戴','#ff1010') +
  txt(218,90,'股本市值: 总股本: 12.79亿 流通盘: 11.41亿 全流通: 0.89 流通市值: 75.65亿','#ffff00') +
  txt(218,106,'当前业绩: 净资收益率: 11.90 毛利率: 27.68 主营利润率 15.71','#00ff00') +
  txt(782,72,'6.63','#a8a8a8') + pl('807,67 826,65','#ddd',1,'stroke-dasharray="4 2"') +
  txt(312,331,'←3.55','#a8a8a8') +
  txt(807,213,'★张停通道','#ffff30',11.5) + txt(767,305,'★张停通道','#ffff30',11.5) +
  `<rect x="438" y="333" width="13" height="15" fill="#0a3a6a"/><rect x="461" y="333" width="13" height="15" fill="#086010"/><rect x="811" y="333" width="13" height="15" fill="#704010"/>` +
  txt(439,345,'财','#fff') + txt(462,345,'减','#fff') + txt(812,345,'榜','#fff');

const tick = (y,len=5) => `<line x1="866" x2="${866+len}" y1="${y}" y2="${y}" stroke="#c00000"/>`;
const label = (y,s) => txt(911,y+4,s,'#e03030',12,'end');
let ax1 = '';
[73.5,116,159,201.5,244,286.5,329.5].forEach(y => ax1 += tick(y));
[95,137.5,180,223,265,308].forEach(y => ax1 += tick(y,3));
[['6.50',73.5],['6.00',116],['5.50',159],['5.00',201.5],['4.50',244],['4.00',286.5],['3.50',329.5]].forEach(([s,y]) => ax1 += label(y,s));
document.getElementById('a1').innerHTML = ax1;
document.getElementById('a2').innerHTML = tick(393) + tick(382,3) + tick(368,3) + tick(430,3) + label(393,'200.0');
document.getElementById('a3').innerHTML = tick(480) + tick(505) + tick(493,3) + tick(470,3) + label(480,'100.0') + label(505,'50.00');
document.getElementById('a4').innerHTML = tick(591) + tick(622) + tick(606,3) + label(591,'20000') + label(622,'10000') +
  `<rect x="866.5" y="640.5" width="32" height="13" fill="none" stroke="#c00000"/>` + txt(868,651,'X100','#e03030',12);

// pane 2
document.getElementById('p2').innerHTML =
  bg('g2',216,368,648,82) +
  bars([[232,259],[356,393],[438,466],[500,517],[593,631],[727,837]],368,441,RED) +
  `<rect x="216" y="441" width="648" height="9" fill="#000"/>` +
  dash(409,'#b8b8c8') + dash(440,'#b8b8c8') +
  pl('240,378 262,378 272,425','#ffff00',1) + pl('385,377 405,378 415,425','#ffff00',1) + pl('460,377 540,377 550,425','#ffff00',1) + pl('623,377 633,377 640,425','#ffff00',1) +
  pl('262,425 270,441 300,445 312,445 340,433 355,425','#fff',1) + pl('395,415 410,418 425,427 430,429 437,425','#fff',1) +
  pl('466,409 488,418 500,415 530,418 540,420 555,432 560,445 570,448 580,441 593,428','#fff',1) + pl('631,425 640,437 660,441 690,444 710,442 725,428','#fff',1) +
  pl('220,424 232,398 238,408 250,408 263,425','#fff',2) + pl('600,425 612,408 625,408 631,420','#fff',2) + pl('737,425 748,408 829,408','#fff',2) + pl('448,420 452,408 462,408 466,412','#fff',2) +
  pl('216,425 830,425','#ff8000',3) +
  pl('216,425 230,425 240,377 252,377 262,425 355,425 364,377 385,377 395,425 436,425 447,377 460,377 466,425 499,425 507,380 518,425 593,425 600,377 623,377 631,425 725,425 735,377 829,377','#ffff00',3.5) +
  pl('720,425 737,425','#ff8000',3) + pl('737,425 746,393 757,425 767,393 788,393 797,425 808,393 829,393','#ff8000',3) +
  pl('224,423 240,422','#ff1010',3) + pl('505,423 510,423','#ff1010',3) + pl('460,424 470,424','#ff1010',3) + pl('575,423 590,423','#ff1010',3) + pl('600,423 612,423','#ff1010',3) + pl('730,424 747,423','#ff1010',3) + pl('807,413 829,402','#ff1010',3) +
  pl('250,425 259,425','#00e600',3) + pl('292,428 304,428','#00e600',2) + pl('622,425 630,425','#00e600',3) + pl('675,428 695,428','#00e600',2) +
  txt(240,392,'庄进') + txt(363,392,'庄进') + txt(445,392,'庄进') + txt(509,392,'庄进') + txt(600,392,'庄进') + txt(735,392,'庄进');

// pane 3
document.getElementById('p3').innerHTML =
  bg('g3',216,470,648,82) +
  bars([[222,249],[438,460],[603,620],[738,755],[815,837]],470,531,GRAY) + bars([[760,772],[778,815]],470,531,RED) +
  `<rect x="216" y="531" width="648" height="21" fill="#000"/>` +
  dash(471,'#ff30ff',216,830) + dash(495.5,'#b8b8c8') + dash(505,'#ffff00') + dash(540,'#00e600') +
  pl('246,530 262,542 275,549 288,530 293,543 310,530 322,527 340,530 365,523 372,532 385,530 395,530 405,528 418,540 430,530','#ffff00',1) +
  pl('466,530 467,542 490,528 508,520 520,535 545,530 550,545 575,518 590,530 620,532 640,535 655,540 672,525 690,532 715,520 740,530 755,528','#ffff00',1) +
  pl('340,530 352,514 365,530 375,514 385,530','#fff',2) + pl('499,530 508,515 518,530','#fff',2) + pl('570,530 580,515 591,530','#fff',2) + pl('600,530 611,515 623,530','#fff',2) +
  pl('222,530 232,515 240,515 250,530','#fff',2) + pl('705,530 715,515 735,515 745,520 757,530 767,515 829,515','#fff',2) + pl('441,530 452,515 460,530','#fff',2) +
  pl('218,530 226,493 238,493 248,530','#ff8000',3) + pl('441,530 450,495 459,530','#ff8000',3) + pl('603,530 611,485 620,530','#ff8000',3) + pl('738,530 746,488 755,530','#ff8000',3) +
  pl('765,495 790,495','#ff8000',2) + pl('808,495 829,495','#ff8000',2) + pl('797,530 829,530','#ff8000',1) +
  pl('216,530 797,530','#ffff00',3) + pl('216,530 757,530','#a8a8c8',1,'stroke-dasharray="4 3"') +
  pl('441,530 448,473 458,530','#ffff00',3) + pl('757,530 767,500 765,477 788,477 797,530 808,477 829,477','#ffff00',3) +
  pl('216,500 225,490 240,483','#ff1010',3) + pl('310,530 330,527 345,515 370,503','#ff1010',3) + pl('497,497 520,492 540,492','#ff1010',3) + pl('560,513 575,512 590,503 600,500','#ff1010',3) + pl('593,500 610,485 623,483','#ff1010',3) + pl('700,530 725,525 750,510 775,490 785,482 829,481','#ff1010',3) +
  pl('249,482 263,497 268,510 283,527 310,530','#00e600',3) + pl('383,500 395,503','#00e600',3) + pl('415,503 427,509','#00e600',3) + pl('548,500 560,513','#00e600',3) + pl('465,489 480,498 490,497','#00e600',3) + pl('633,500 647,513 673,527 693,530','#00e600',3) +
  txt(446,489,'涨停雷达') + txt(766,489,'涨停雷达') + txt(806,489,'涨停雷达');

// pane 4
const vol = [[220,648,'o'],[230,635,'h'],[240,639,'h'],[250,642,'h'],[261,642,'b'],[271,644,'b'],[281,646,'o'],[292,648,'b'],[302,647,'b'],[312,650,'o'],[323,647,'o'],[333,648,'b'],[343,648,'o'],[353,638,'h'],[364,645,'h'],[374,646,'o'],[384,643,'b'],[395,648,'o'],[405,646,'b'],[415,646,'b'],[426,649,'o'],[436,646,'o'],[446,633,'h'],[457,637,'h'],[467,643,'h'],[477,644,'b'],[488,646,'o'],[498,645,'b'],[508,644,'o'],[518,645,'b'],[529,647,'b'],[539,645,'o'],[549,645,'b'],[560,646,'b'],[570,647,'o'],[580,642,'o'],[590,644,'h'],[600,648,'o'],[611,639,'h'],[621,646,'h'],[631,646,'b'],[642,642,'b'],[652,647,'o'],[662,647,'b'],[672,648,'b'],[683,649,'b'],[693,649,'b'],[704,650,'o'],[715,648,'o'],[725,644,'h'],[735,647,'h'],[746,646,'h'],[756,644,'h'],[766,623,'h'],[777,572,'h'],[787,575,'h'],[797,588,'h'],[807,600,'o'],[818,622,'o'],[828,624,'o']];
document.getElementById('p4').innerHTML =
  bg('g4',216,572,648,82) +
  bars([[216,222],[263,290],[294,332],[335,345],[373,383],[387,404],[418,438],[476,497],[500,517],[521,548],[552,583],[600,603],[631,640],[645,660],[665,717],[806,816]],572,650,GRAY) +
  bars([[222,259],[345,373],[438,476],[583,600],[603,631],[717,806]],572,650,RED) +
  pl('216,646 790,646','#ff2020',1,'stroke-dasharray="4 4"') +
  vol.map(([x,t,k]) => k=='h'
    ? `<rect x="${x-4.5}" y="${t+.5}" width="9" height="${653-t}" fill="#000" stroke="#ffff00"/>`
    : `<rect x="${x-4.5}" y="${t}" width="9.5" height="${654-t}" fill="${k=='o'?ORG:BLU}"/>`).join('') +
  pl('235,637 247,640','#ffff00',3) + pl('463,639 470,641','#ffff00',3) + pl('617,642 627,643','#ffff00',3) + pl('722,645 756,645','#ffff00',2) + pl('753,646 771,610 775,590','#ffff00',3) + pl('783,588 788,573 798,582','#ffff00',3);
</script>
</body>
</html>
